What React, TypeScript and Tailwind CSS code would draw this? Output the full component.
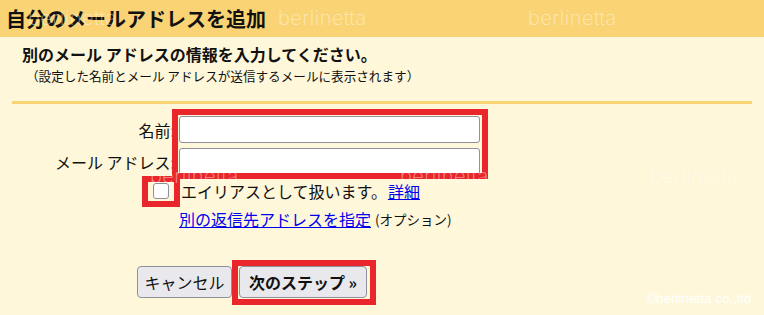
import React from "react";

const JP = { fontFamily: '"Noto Sans CJK JP", "Noto Sans", sans-serif' };
const WM = { fontFamily: 'Inter, "DejaVu Sans", sans-serif' };

function Watermark({ className }: { className: string }) {
  return (
    <span
      style={WM}
      className={`pointer-events-none absolute whitespace-nowrap text-[20px] font-extralight leading-none tracking-[0.5px] text-white/50 ${className}`}
    >
      berlinetta
    </span>
  );
}

export default function App() {
  return (
    <div
      style={JP}
      className="relative h-[315px] w-[764px] overflow-hidden bg-[#fef7da] text-[#111]"
    >
      {/* header */}
      <div className="flex h-[37px] items-center bg-[#f9d374] pl-[6px]">
        <h1 className="text-[20px] font-bold leading-none">
          自分のメールアドレスを追加
        </h1>
      </div>

      {/* intro */}
      <p className="mt-[6px] pl-[22px] text-[16px] font-bold leading-[22px]">
        別のメール アドレスの情報を入力してください。
      </p>
      <p className="mt-[2px] pl-[26px] text-[12.6px] leading-[18px]">
        （設定した名前とメール アドレスが送信するメールに表示されます）
      </p>

      <div className="mx-[12px] mt-[16px] h-[3px] bg-[#f9d374]" />

      {/* form */}
      <div className="mt-[12px] text-[16px]">
        <div className="flex items-start gap-[4px]">
          <div className="flex w-[175px] flex-col items-end gap-[5px]">
            <label className="flex h-[27px] items-center">名前:</label>
            <label className="flex h-[27px] items-center">メール アドレス:</label>
          </div>
          <div className="relative flex flex-col gap-[5px]">
            <input className="h-[27px] w-[301px] rounded-[3px] border border-[#8f8f9d] bg-white px-1 outline-none" />
            <input className="h-[27px] w-[301px] rounded-[3px] border border-[#8f8f9d] bg-white px-1 outline-none" />
            <div className="pointer-events-none absolute left-[-7px] top-[-7px] h-[70px] w-[316px] border-[6px] border-[#e8262c]" />
          </div>
        </div>

        <div className="mt-[5px] flex h-[22px] items-center gap-[4px]">
          <div className="flex w-[175px] justify-end">
            <div className="relative mr-[6px] h-[16px] w-[16px]">
              <input
                type="checkbox"
                className="block h-[16px] w-[16px] appearance-none rounded-[3px] border border-[#8f8f9d] bg-white"
              />
              <div className="pointer-events-none absolute left-[-11px] top-[-7px] h-[31px] w-[38px] border-[6px] border-[#e8262c]" />
            </div>
          </div>
          <span className="ml-[2px] leading-[22px]">
            エイリアスとして扱います。<a className="ml-[1px] text-[#0000ee] underline">詳細</a>
          </span>
        </div>

        <div className="mt-[6px] flex h-[22px] items-center pl-[179px]">
          <a className="text-[#0000ee] underline leading-[22px]">別の返信先アドレスを指定</a>
          <span className="ml-[4px] text-[13.5px]">(オプション)</span>
        </div>

        <div className="mt-[36px] flex items-center gap-[7px] pl-[137px]">
          <button className="h-[32px] w-[95px] rounded-[4px] border border-[#8f8f9d] bg-[#e9e9ed] text-[16px]">
            キャンセル
          </button>
          <div className="relative">
            <button className="h-[32px] w-[128px] rounded-[4px] border border-[#8f8f9d] bg-[#e9e9ed] text-[16px] font-bold">
              次のステップ »
            </button>
            <div className="pointer-events-none absolute left-[-7px] top-[-6px] h-[45px] w-[144px] border-[6px] border-[#e8262c]" />
          </div>
        </div>
      </div>

      {/* watermarks */}
      <Watermark className="left-[28px] top-[8px]" />
      <Watermark className="left-[278px] top-[8px]" />
      <Watermark className="left-[528px] top-[8px]" />
      <Watermark className="left-[150px] top-[166px]" />
      <Watermark className="left-[400px] top-[166px]" />
      <Watermark className="left-[650px] top-[166px]" />
      <span
        style={{ fontFamily: '"Liberation Sans", Arial, sans-serif' }}
        className="absolute right-[9px] top-[290px] whitespace-nowrap text-[13.5px] leading-[18px] text-white"
      >
        ©berlinetta co.,ltd.
      </span>
    </div>
  );
}
